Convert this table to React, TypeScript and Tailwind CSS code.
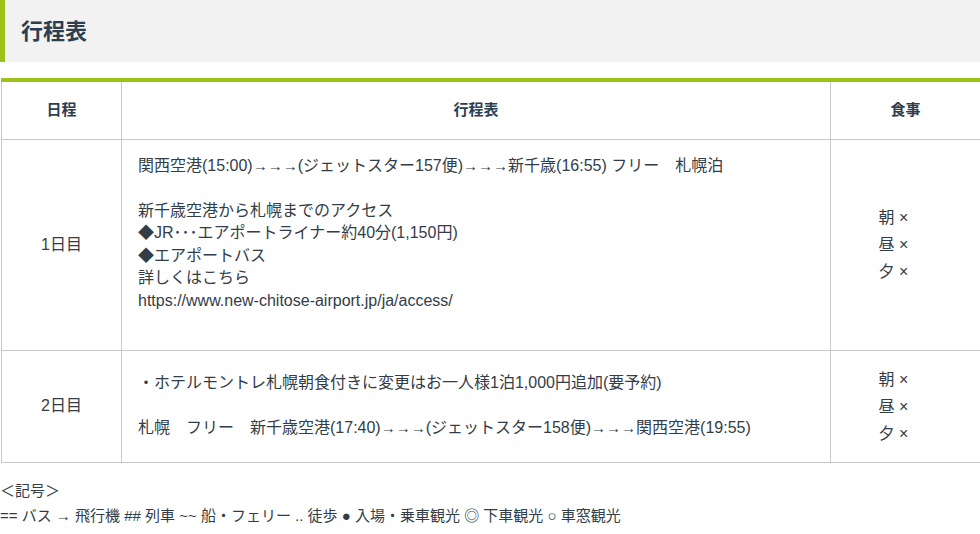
import React from 'react';

type Day = {
    label: string;
    lines: string[];
    meals: string[];
};

const days: Day[] = [
    {
        label: '1日目',
        lines: [
            '関西空港(15:00)→→→(ジェットスター157便)→→→新千歳(16:55) フリー　札幌泊',
            '',
            '新千歳空港から札幌までのアクセス',
            '◆JR･･･エアポートライナー約40分(1,150円)',
            '◆エアポートバス',
            '詳しくはこちら',
            'https://www.new-chitose-airport.jp/ja/access/',
            '',
        ],
        meals: ['朝 ×', '昼 ×', '夕 ×'],
    },
    {
        label: '2日目',
        lines: [
            '・ホテルモントレ札幌朝食付きに変更はお一人様1泊1,000円追加(要予約)',
            '',
            '札幌　フリー　新千歳空港(17:40)→→→(ジェットスター158便)→→→関西空港(19:55)',
        ],
        meals: ['朝 ×', '昼 ×', '夕 ×'],
    },
];

const font = { fontFamily: '"Liberation Sans", "Noto Sans CJK JP", sans-serif' };

// arrows run a touch narrower than the body text in the original
const Arrowed: React.FC<{ text: string }> = ({ text }) => (
    <>
        {text.split(/(→+)/).map((part, i) =>
            part.startsWith('→')
                ? <span key={i} className="text-[15px]">{part}</span>
                : <React.Fragment key={i}>{part}</React.Fragment>
        )}
    </>
);

const App: React.FC = () => {
    return (
        <div className="w-[980px] overflow-hidden bg-white text-[#333d47]" style={font}>
            <div className="h-[62px] bg-[#f2f2f2] border-l-[5px] border-[#9bc31c] flex items-center pl-4">
                <h2 className="text-[22px] font-bold text-[#2c3e50]">行程表</h2>
            </div>

            <div className="mt-4 pl-[1px]">
                <table className="w-[980px] table-fixed border-t-4 border-[#9bc31c]">
                    <colgroup>
                        <col className="w-[120px]" />
                        <col className="w-[709px]" />
                        <col />
                    </colgroup>
                    <thead>
                        <tr>
                            <th className="h-[59px] border border-t-4 border-[#c8c8c8] border-t-[#9bc31c] text-[15px] font-bold text-[#2c3e50] text-center">日程</th>
                            <th className="h-[59px] border border-t-4 border-[#c8c8c8] border-t-[#9bc31c] text-[15px] font-bold text-[#2c3e50] text-center">行程表</th>
                            <th className="h-[59px] border border-t-4 border-[#c8c8c8] border-t-[#9bc31c] text-[15px] font-bold text-[#2c3e50] text-center">食事</th>
                        </tr>
                    </thead>
                    <tbody>
                        {days.map(day => (
                            <tr key={day.label}>
                                <td className="border border-[#c8c8c8] text-center align-middle text-[16px]">{day.label}</td>
                                <td className="border border-[#c8c8c8] px-4 py-[15px] align-middle text-[16px] leading-[22.5px]">
                                    {day.lines.map((line, i) => (
                                        <div key={i} className="h-[22.5px] whitespace-nowrap">{line ? <Arrowed text={line} /> : '\u00a0'}</div>
                                    ))}
                                </td>
                                <td className="border border-[#c8c8c8] py-[15px] pr-6 text-center align-middle text-[16px] leading-[27px]">
                                    {day.meals.map(m => (
                                        <div key={m}>{m}</div>
                                    ))}
                                </td>
                            </tr>
                        ))}
                    </tbody>
                </table>
            </div>

            <div className="mt-[15px] text-[15px] leading-[25px]">
                <p>＜記号＞</p>
                <p className="h-[25px]">== バス → 飛行機 ## 列車 ~~ 船・フェリー .. 徒歩 ● 入場・乗車観光 ◎ 下車観光 ○ 車窓観光</p>
            </div>
        </div>
    );
};

export default App;
